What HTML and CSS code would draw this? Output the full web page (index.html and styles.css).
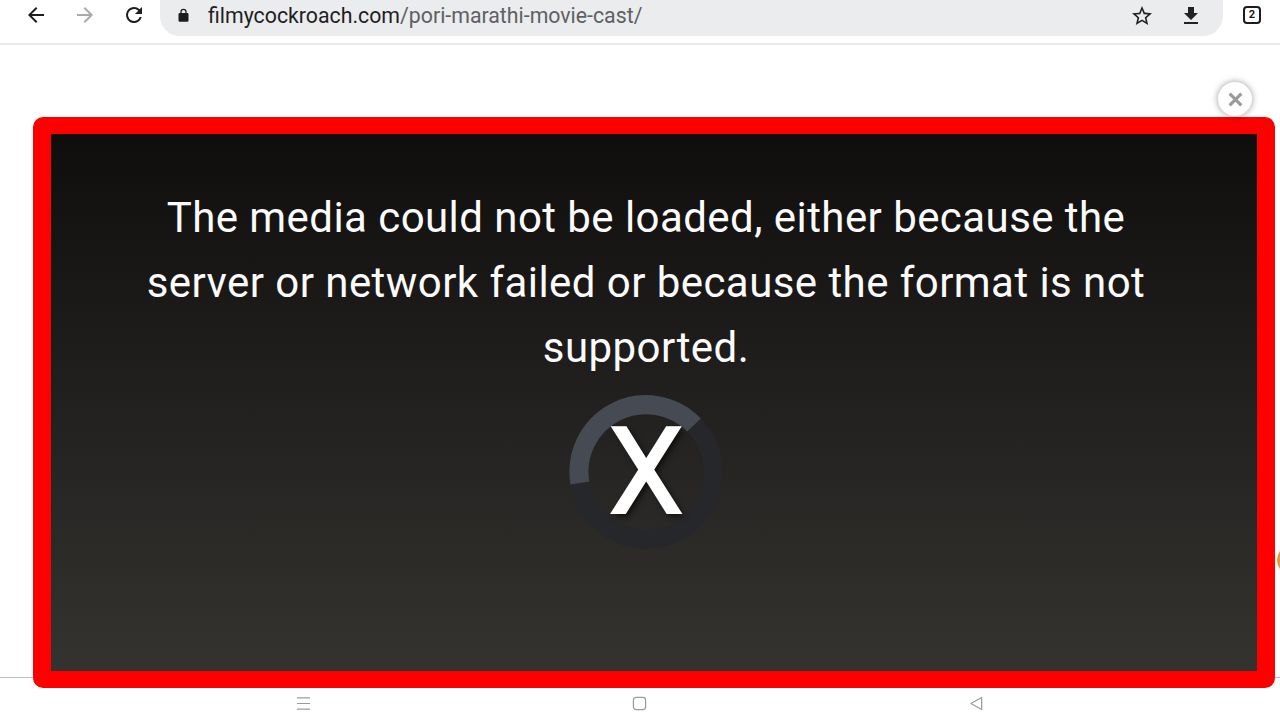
FILE: index.html
```html
<!DOCTYPE html>
<html lang="en">
<head>
<meta charset="utf-8">
<title>filmycockroach.com</title>
<link rel="stylesheet" href="styles.css">
</head>
<body>
<div class="page">
  <header class="toolbar">
    <div class="nav-buttons">
      <svg class="tool-icon" viewBox="0 0 24 24"><path d="M20 11H7.8l5.6-5.6L12 4l-8 8 8 8 1.4-1.4L7.8 13H20z"/></svg>
      <svg class="tool-icon disabled" viewBox="0 0 24 24"><path d="M4 11h12.2l-5.6-5.6L12 4l8 8-8 8-1.4-1.4 5.6-5.6H4z"/></svg>
      <svg class="tool-icon" viewBox="0 0 24 24"><path d="M17.65 6.35A7.95 7.95 0 0 0 12 4a8 8 0 1 0 7.73 10h-2.08A6 6 0 1 1 12 6c1.66 0 3.14.69 4.22 1.78L13 11h7V4z"/></svg>
    </div>
    <div class="omnibox">
      <svg class="lock" viewBox="0 0 24 24"><path d="M18 8h-1V6a5 5 0 0 0-10 0v2H6a2 2 0 0 0-2 2v10a2 2 0 0 0 2 2h12a2 2 0 0 0 2-2V10a2 2 0 0 0-2-2zM9 6a3 3 0 0 1 6 0v2H9z"/></svg>
      <span class="url"><span class="domain">filmycockroach.com</span>/pori-marathi-movie-cast/</span>
      <svg class="star" viewBox="0 0 24 24"><path d="M22 9.24l-7.19-.62L12 2 9.19 8.63 2 9.24l5.46 4.73L5.82 21 12 17.27 18.18 21l-1.63-7.03L22 9.24zM12 15.4l-3.76 2.27 1-4.28-3.32-2.88 4.38-.38L12 6.1l1.71 4.04 4.38.38-3.32 2.88 1 4.28L12 15.4z"/></svg>
      <svg class="download" viewBox="0 0 24 24"><path d="M19 9h-4V3H9v6H5l7 7 7-7zM5 18v2h14v-2H5z"/></svg>
    </div>
    <div class="tabs-count">2</div>
  </header>

  <main class="content"></main>

  <footer class="system-nav">
    <svg class="sys-icon" viewBox="0 0 16 16"><path d="M1 2h14M1 8h14M1 14h14"/></svg>
    <svg class="sys-icon" viewBox="0 0 16 16"><rect x="1.5" y="1.5" width="13" height="13" rx="3"/></svg>
    <svg class="sys-icon" viewBox="0 0 16 16"><path d="M13.5 1.5v13L2 8z" stroke-linejoin="round"/></svg>
  </footer>

  <aside class="ad-overlay">
    <button class="close-badge" type="button" aria-label="Close">
      <svg viewBox="0 0 16 16"><path d="M2.5 2.5l11 11M13.5 2.5l-11 11"/></svg>
    </button>
    <div class="player">
      <p class="message">The media could not be loaded, either because the server or network failed or because the format is not supported.</p>
      <div class="spinner">
        <svg viewBox="0 0 154 154">
          <circle class="ring-track" cx="77" cy="77" r="67"/>
          <path class="ring-arc" d="M 10.9 88 A 67 67 0 0 1 125 30"/>
        </svg>
        <span class="spinner-x">X</span>
      </div>
    </div>
  </aside>
  <span class="edge-dot"></span>
</div>
</body>
</html>
```
FILE: styles.css
```css
* { box-sizing: border-box; }
html, body { margin: 0; padding: 0; }
body {
  width: 1280px;
  height: 720px;
  overflow: hidden;
  background: #fff;
  font-family: Roboto, "Liberation Sans", sans-serif;
}
.page {
  position: relative;
  width: 1280px;
  height: 720px;
  display: flex;
  flex-direction: column;
  overflow: hidden;
}

/* browser toolbar */
.toolbar {
  height: 45px;
  flex: none;
  display: flex;
  align-items: flex-start;
  border-bottom: 2px solid #e9e9e9;
  padding-left: 24px;
}
.nav-buttons {
  display: flex;
  gap: 25px;
  padding-top: 3px;
}
.tool-icon { width: 24px; height: 24px; fill: #1d1d1d; display: block; }
.tool-icon.disabled { fill: #a9a9a9; }
.omnibox {
  width: 1063px;
  height: 36px;
  margin-left: 14px;
  background: #ebecee;
  border-radius: 0 0 20px 20px;
  display: flex;
  align-items: center;
  padding: 0 20px 5px 16px;
}
.lock { width: 15px; height: 15px; fill: #1c1c1c; flex: none; }
.url {
  margin-left: 17px;
  font-size: 21.3px;
  color: #5e6064;
  white-space: nowrap;
  flex: 1;
}
.domain { color: #1f1f1f; }
.star { width: 24px; height: 24px; fill: #222; flex: none; }
.download { width: 24px; height: 24px; fill: #222; flex: none; margin-left: 25px; }
.tabs-count {
  width: 18px;
  height: 18px;
  margin: 6px 0 0 20px;
  border: 2px solid #1c1c1c;
  border-radius: 4px;
  font-size: 11px;
  font-weight: 700;
  line-height: 14px;
  text-align: center;
  color: #1c1c1c;
}

.content { flex: 1; background: #fff; }

/* android nav bar */
.system-nav {
  height: 43px;
  flex: none;
  border-top: 1px solid #bdbdbd;
  background: #fff;
  display: flex;
  justify-content: center;
  align-items: flex-start;
  gap: 321.5px;
  padding: 18px 1px 0 0;
}
.sys-icon {
  width: 15px;
  height: 15px;
  fill: none;
  stroke: #9b9b9b;
  stroke-width: 1.3;
  display: block;
}

/* overlay */
.ad-overlay {
  position: absolute;
  left: 33px;
  top: 117px;
  width: 1242px;
  height: 571px;
  border: solid #ff0000;
  border-width: 17px 18px 17px 18px;
  border-radius: 10px;
}
.close-badge {
  position: absolute;
  right: 5px;
  top: -52px;
  width: 34px;
  height: 34px;
  padding: 0;
  border: none;
  border-radius: 50%;
  background: #fff;
  box-shadow: 0 0 7px rgba(0, 0, 0, .4);
  display: flex;
  align-items: center;
  justify-content: center;
}
.close-badge svg {
  width: 17px;
  height: 17px;
  fill: none;
  stroke: #9a9a9a;
  stroke-width: 3;
}
.player {
  height: 100%;
  background: linear-gradient(#0f0e0d, #353330);
  padding: 51px 16px 0 0;
  display: flex;
  flex-direction: column;
  align-items: center;
}
.message {
  margin: 0;
  width: 1040px;
  font-size: 42px;
  line-height: 65px;
  letter-spacing: 0.44px;
  text-align: center;
  color: #fbfbfb;
}
.spinner {
  position: relative;
  width: 154px;
  height: 154px;
  margin-top: 15px;
}
.spinner svg { display: block; width: 154px; height: 154px; fill: none; }
.ring-track { stroke: #25272b; stroke-width: 19; }
.ring-arc { stroke: #464a53; stroke-width: 19; }
.spinner-x {
  position: absolute;
  inset: 0;
  display: flex;
  align-items: center;
  justify-content: center;
  font-family: Roboto, sans-serif;
  font-weight: 400;
  font-size: 120px;
  color: #fff;
  -webkit-text-stroke: 2px #fff;
  text-shadow: 3px 3px 6px rgba(0, 0, 0, .7);
}
.edge-dot {
  position: absolute;
  left: 1277px;
  top: 545px;
  width: 30px;
  height: 30px;
  border-radius: 50%;
  background: #e8973a;
}
```
